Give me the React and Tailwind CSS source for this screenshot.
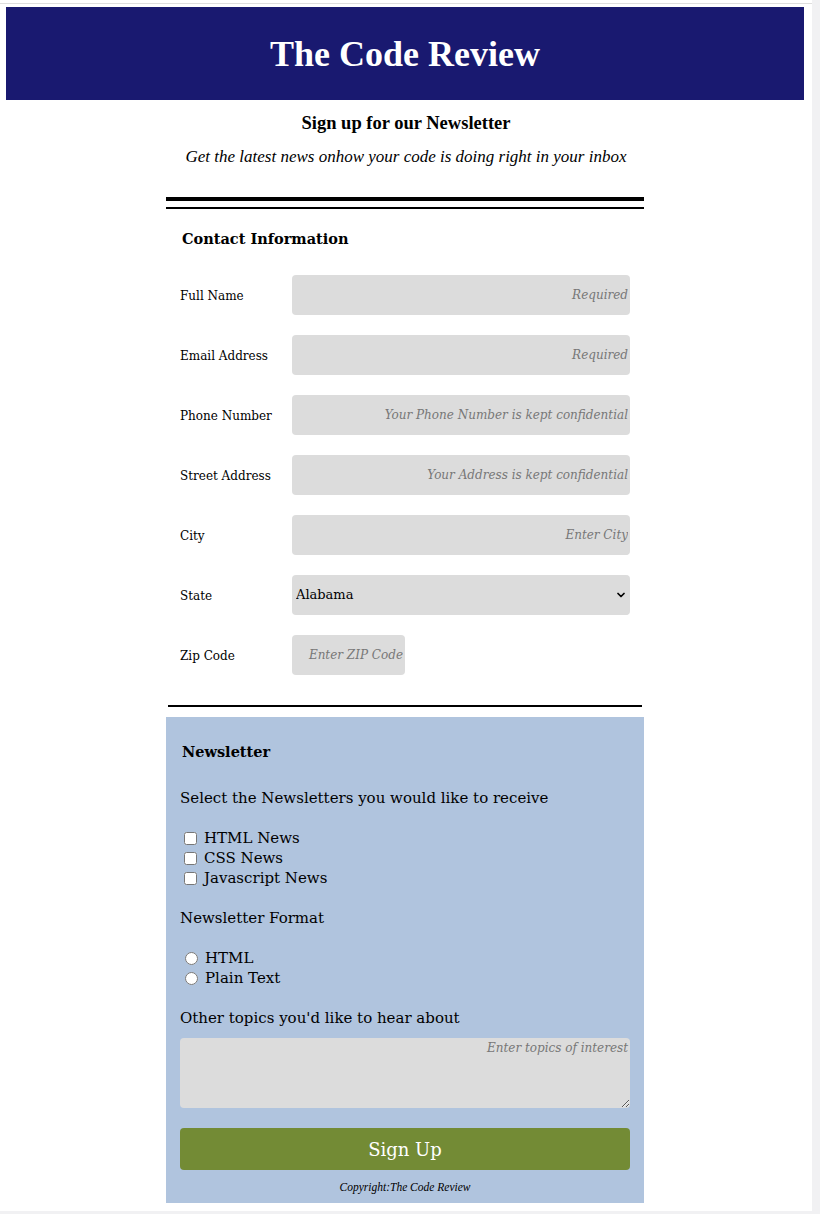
import React from "react";
import { ChevronDown } from "lucide-react";

const serif = { fontFamily: "'DejaVu Serif', 'Liberation Serif', serif" };
const times = { fontFamily: "'Liberation Serif', serif" };

const fields = [
  { label: "Full Name", placeholder: "Required" },
  { label: "Email Address", placeholder: "Required" },
  { label: "Phone Number", placeholder: "Your Phone Number is kept confidential" },
  { label: "Street Address", placeholder: "Your Address is kept confidential" },
  { label: "City", placeholder: "Enter City" },
];

const App = () => {
  return (
    <div className="min-h-screen bg-[#f1f1f3]" style={serif}>
      <div className="w-[812px] bg-white pt-[3px] pb-[8px]">
        <div className="border-t border-[#dedede] pt-[3px]">
          {/* Header */}
          <header className="ml-[6px] w-[798px] h-[93px] bg-[#191970] flex items-center justify-center">
            <h1 className="text-white text-[36px] font-bold leading-none" style={times}>
              The Code Review
            </h1>
          </header>

          <h2
            className="mt-[11px] text-center text-[18.5px] font-bold leading-[24px] text-black"
            style={times}
          >
            Sign up for our Newsletter
          </h2>
          <p
            className="mt-[10px] text-center text-[17px] italic leading-[24px] text-black"
            style={times}
          >
            Get the latest news onhow your code is doing right in your inbox
          </p>

          <div className="ml-[166px] w-[478px]">
            {/* double rule */}
            <div className="mt-[28px] h-[4px] bg-black"></div>
            <div className="mt-[6px] h-[2px] bg-black"></div>

            {/* Contact Information */}
            <div className="px-[14px]">
              <h3 className="mt-[18px] ml-[2px] text-[14.5px] font-bold leading-[24px] text-black">
                Contact Information
              </h3>
              <div className="mt-[24px] flex flex-col gap-[20px]">
                {fields.map((f) => (
                  <div key={f.label} className="flex items-center">
                    <label className="w-[112px] pt-[2px] text-[12px] text-black">{f.label}</label>
                    <input
                      type="text"
                      placeholder={f.placeholder}
                      className="w-[338px] h-[40px] rounded-[4px] bg-[#dcdcdc] px-[2px] text-right text-[12px] italic outline-none placeholder:text-[#777]"
                    />
                  </div>
                ))}
                <div className="flex items-center">
                  <label className="w-[112px] pt-[2px] text-[12px] text-black">State</label>
                  <div className="relative w-[338px] h-[40px]">
                    <select className="w-full h-full appearance-none rounded-[4px] bg-[#dcdcdc] pl-[4px] text-[13px] text-black outline-none">
                      <option>Alabama</option>
                      <option>Alaska</option>
                      <option>Arizona</option>
                    </select>
                    <ChevronDown
                      size={12}
                      strokeWidth={3.5}
                      className="absolute right-[3px] top-[14px] text-black pointer-events-none"
                    />
                  </div>
                </div>
                <div className="flex items-center">
                  <label className="w-[112px] pt-[2px] text-[12px] text-black">Zip Code</label>
                  <input
                    type="text"
                    placeholder="Enter ZIP Code"
                    className="w-[113px] h-[40px] rounded-[4px] bg-[#dcdcdc] px-[2px] text-right text-[12px] italic outline-none placeholder:text-[#777]"
                  />
                </div>
              </div>
            </div>

            <div className="mt-[30px] mx-[2px] h-[2px] bg-black"></div>

            {/* Newsletter */}
            <section className="mt-[10px] bg-[#b0c4de] px-[14px] pt-[23px] pb-[9px] text-black">
              <h3 className="ml-[2px] text-[14.5px] font-bold leading-[24px]">Newsletter</h3>
              <p className="mt-[24px] text-[15px] leading-[20px]">
                Select the Newsletters you would like to receive
              </p>
              <div className="mt-[20px] text-[15px] leading-[20px]">
                {["HTML News", "CSS News", "Javascript News"].map((n) => (
                  <label key={n} className="flex items-center">
                    <input type="checkbox" className="ml-[4px] mr-[7px] w-[13px] h-[13px]" />
                    {n}
                  </label>
                ))}
              </div>
              <p className="mt-[20px] text-[15px] leading-[20px]">Newsletter Format</p>
              <div className="mt-[20px] text-[15px] leading-[20px]">
                {["HTML", "Plain Text"].map((n) => (
                  <label key={n} className="flex items-center">
                    <input type="radio" name="format" className="ml-[5px] mr-[7px] w-[13px] h-[13px]" />
                    {n}
                  </label>
                ))}
              </div>
              <p className="mt-[20px] text-[15px] leading-[20px]">
                Other topics you'd like to hear about
              </p>
              <textarea
                placeholder="Enter topics of interest"
                className="mt-[10px] block w-[450px] h-[70px] rounded-[4px] bg-[#dcdcdc] px-[2px] pt-[1px] text-right text-[12px] italic outline-none placeholder:text-[#777]"
              ></textarea>
              <button className="mt-[20px] w-[450px] h-[42px] rounded-[4px] bg-[#738b35] text-white text-[18px]">
                Sign Up
              </button>
              <p className="mt-[10px] text-center text-[11.5px] italic leading-[14px]" style={times}>
                Copyright:The Code Review
              </p>
            </section>
          </div>
        </div>
      </div>
    </div>
  );
};

export default App;
